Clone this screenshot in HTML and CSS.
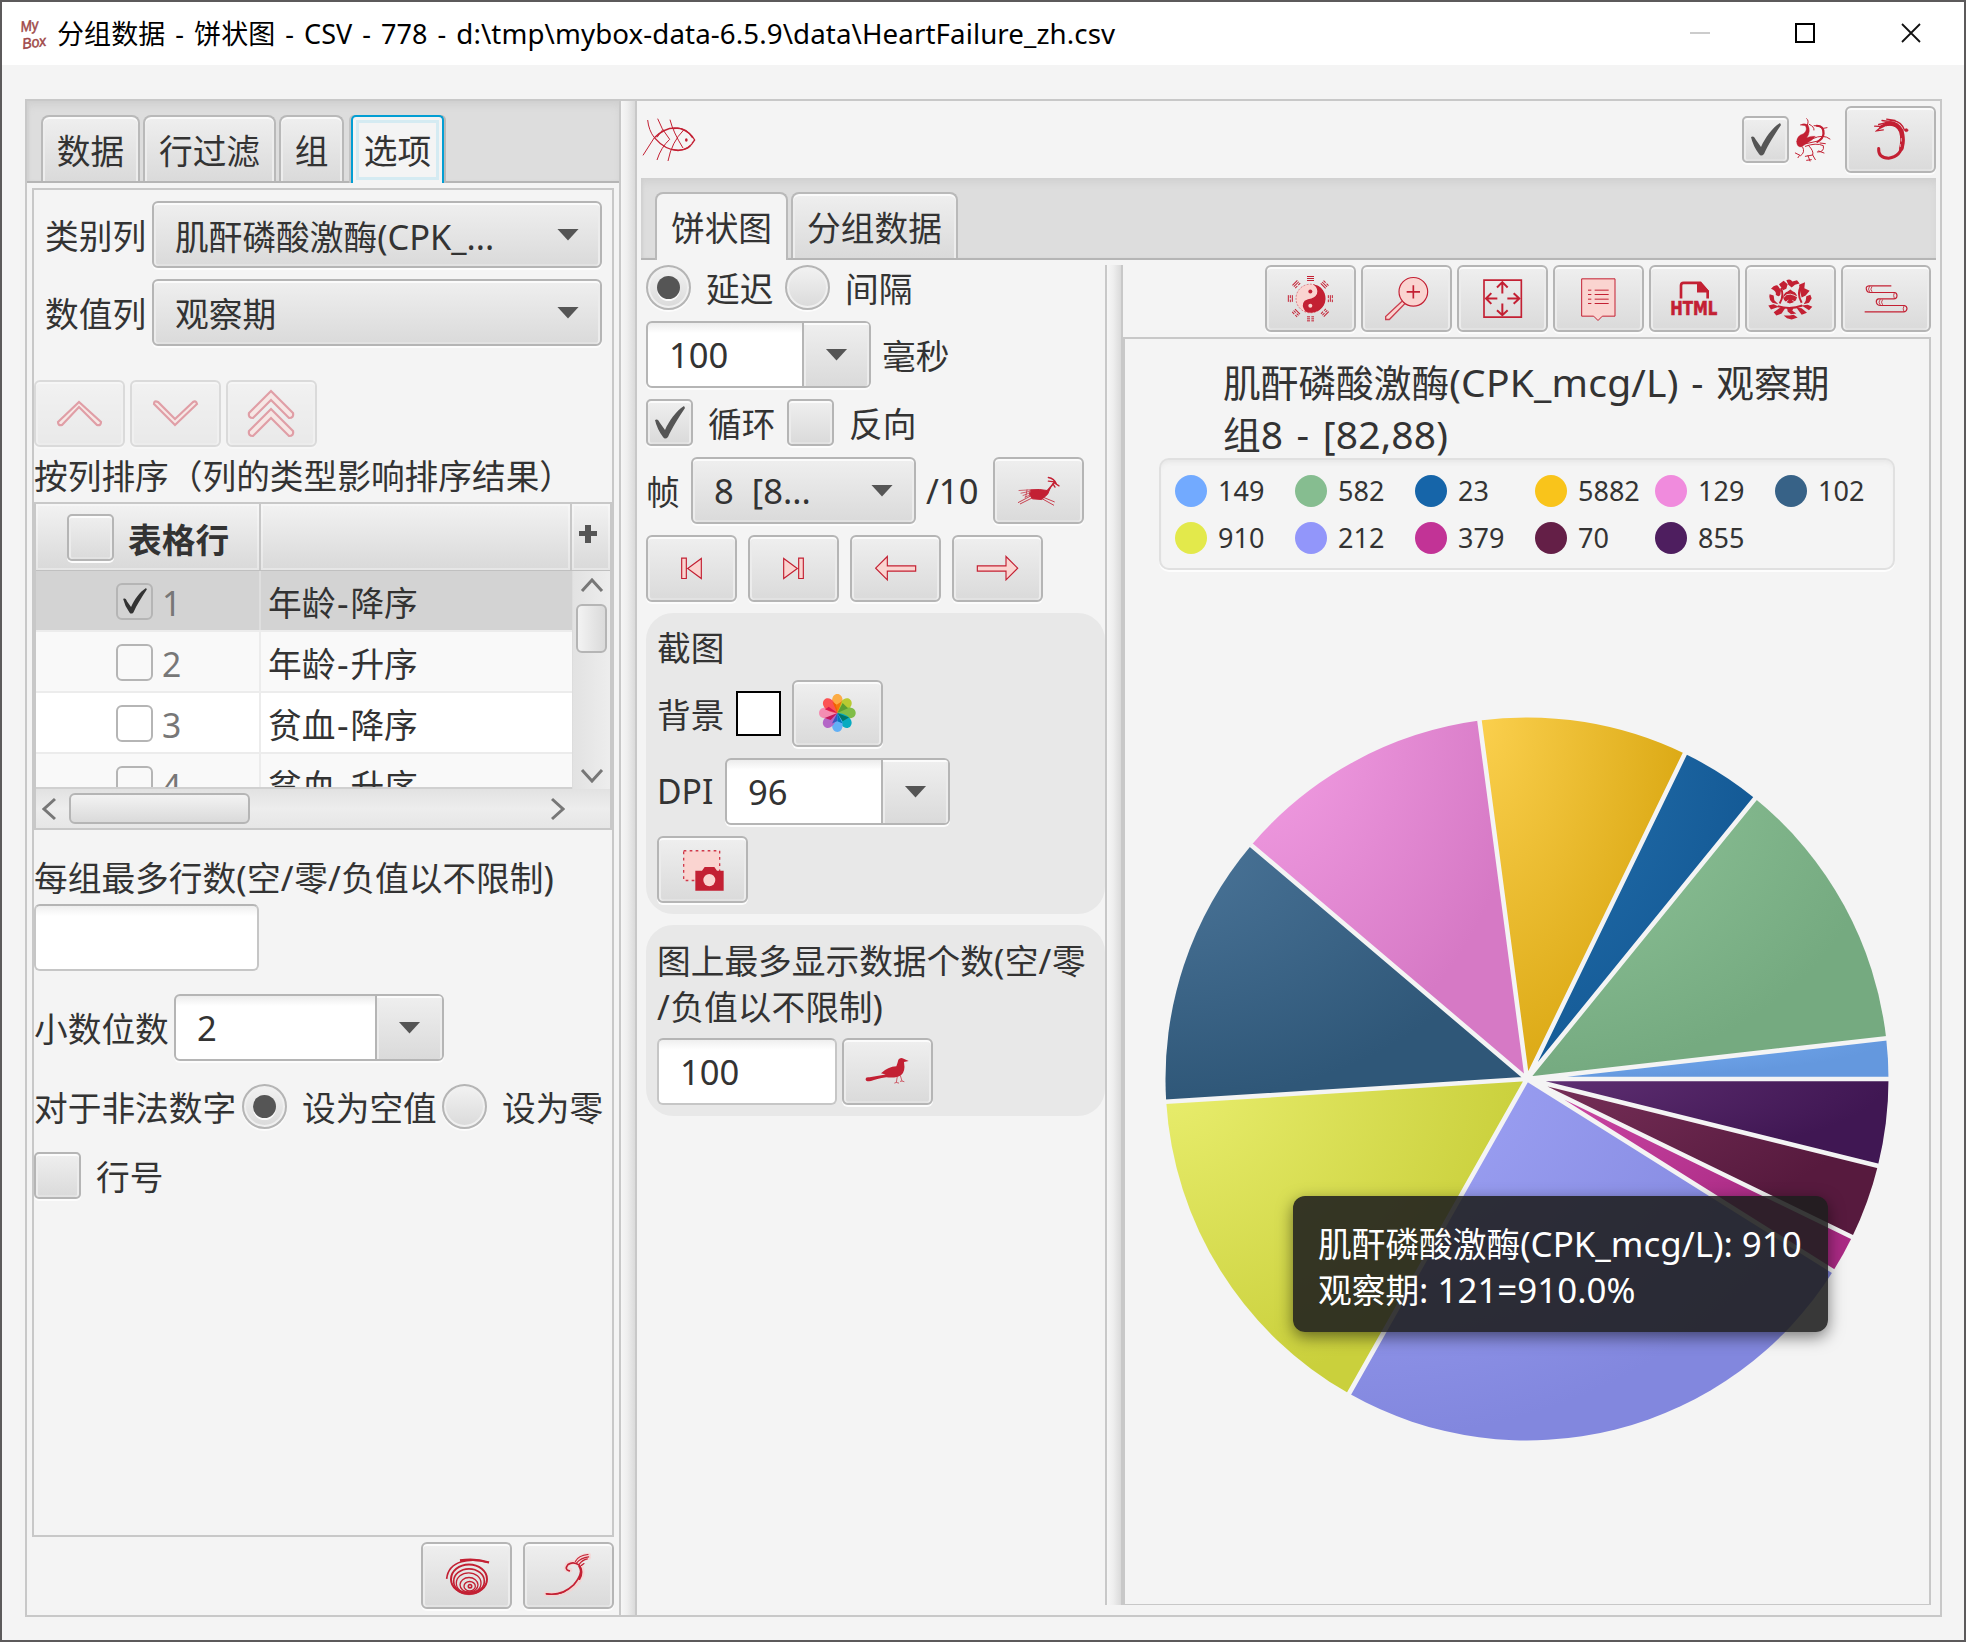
FILE: index.html
```html
<!DOCTYPE html>
<html lang="zh-CN">
<head>
<meta charset="utf-8">
<title>分组数据 - 饼状图</title>
<link rel="stylesheet" href="styles.css">
</head>
<body>
<svg class="defs" width="0" height="0" aria-hidden="true">
  <symbol id="tick" viewBox="0 0 30 33"><path d="M0 14C2 13 3 13 5 17L10 24C14 15 21 5 29 0L30 2C24 11 17 22 13 31Q10 34 8 31Q2 23 0 14Z" fill="currentColor"/></symbol>
</svg>
<div class="window">
  <header class="titlebar">
    <svg class="logo" width="32" height="38" viewBox="0 0 32 38"><g font-family="Liberation Sans" font-style="italic" font-size="15" fill="#a04848" stroke="#a04848" stroke-width=".5"><text transform="rotate(-8 1 16)" x="1" y="17" textLength="18" lengthAdjust="spacingAndGlyphs">My</text><text transform="rotate(-8 3 34)" x="3" y="34" textLength="24" lengthAdjust="spacingAndGlyphs">Box</text></g></svg>
    <span class="title">分组数据 - 饼状图 - CSV - 778 - <span class="path">d:\tmp\mybox-data-6.5.9\data\HeartFailure_zh.csv</span></span>
    <svg class="winctl" width="240" height="30" viewBox="0 0 240 30"><path d="M0 14H20" stroke="#ccc" stroke-width="2"/><path d="M106 5h18v18h-18z" fill="none" stroke="#000" stroke-width="2"/><path d="M212 5l18 18M230 5l-18 18" stroke="#111" stroke-width="1.8"/></svg>
  </header>
  <main class="main">
    <section class="left">
      <nav class="tabs tabs-left">
        <span class="tab tab-a">数据</span><span class="tab tab-b">行过滤</span><span class="tab tab-c">组</span><span class="tab tab-d active focused">选项</span>
      </nav>
      <div class="options">
        <div class="form">
          <span class="lbl">类别列</span>
          <div class="combo"><span class="lbl">肌酐磷酸激酶<span class="lat">(CPK_...</span></span><i class="arrow"></i></div>
          <span class="lbl">数值列</span>
          <div class="combo"><span class="lbl">观察期</span><i class="arrow"></i></div>
        </div>
        <div class="row moves">
          <button class="btn off"><svg viewBox="0 0 91 67"><path d="M24 42L45 22L67 42Q67 46 63 45L45 27L28 45Q24 46 24 42Z"/></svg></button>
          <button class="btn off"><svg viewBox="0 0 91 67"><path d="M24 24L45 45L67 24Q66 20 63 22L45 39L28 22Q24 20 24 24Z"/></svg></button>
          <button class="btn off"><svg viewBox="0 0 91 67"><path d="M23 33L45 11L67 33Q68 38 63 38L45 20L27 38Q22 38 23 33Z"/><path d="M23 51L45 29L67 51Q68 56 63 56L45 38L27 56Q22 56 23 51Z"/></svg></button>
        </div>
        <div class="lbl sortcap">按列排序（列的类型影响排序结果）</div>
        <div class="table">
          <div class="thead"><div class="th c1"><i class="box"></i><b>表格行</b></div><div class="th c2"></div><div class="th c3"><svg width="18" height="18" viewBox="0 0 18 18"><path d="M6 0h6v6h6v5h-6v7H6v-7H0V6h6z" fill="#555"/></svg></div></div>
          <div class="tbody">
            <div class="rows">
              <div class="tr sel"><div class="td c1"><i class="sbox"><svg width="24" height="26"><use href="#tick"/></svg></i><span>1</span></div><div class="td c2">年龄<span class="dash">-</span>降序</div></div>
              <div class="tr alt"><div class="td c1"><i class="sbox"></i><span>2</span></div><div class="td c2">年龄<span class="dash">-</span>升序</div></div>
              <div class="tr"><div class="td c1"><i class="sbox"></i><span>3</span></div><div class="td c2">贫血<span class="dash">-</span>降序</div></div>
              <div class="tr alt"><div class="td c1"><i class="sbox"></i><span>4</span></div><div class="td c2">贫血<span class="dash">-</span>升序</div></div>
            </div>
            <div class="vbar"><svg width="24" height="14" viewBox="0 0 24 14"><path d="M2 13L12 2L22 13"/></svg><i class="vthumb"></i><svg class="end" width="24" height="14" viewBox="0 0 24 14"><path d="M2 1L12 12L22 1"/></svg></div>
          </div>
          <div class="hbar"><svg width="14" height="24" viewBox="0 0 14 24"><path d="M13 2L2 12L13 22"/></svg><i class="hthumb"></i><svg class="end" width="14" height="24" viewBox="0 0 14 24"><path d="M1 2L12 12L1 22"/></svg></div>
        </div>
        <div class="lbl maxcap">每组最多行数<span class="sym">(</span>空<span class="sym">/</span>零<span class="sym">/</span>负值以不限制<span class="sym">)</span></div>
        <div class="input rowmax"></div>
        <div class="row gap23"><span class="lbl w140">小数位数</span><div class="edit dec"><span class="val">2</span><span class="drop"><i class="arrow"></i></span></div></div>
        <div class="row gap23"><span class="lbl w208">对于非法数字</span><i class="radio on"></i><span class="lbl rl w155">设为空值</span><i class="radio"></i><span class="lbl rl">设为零</span></div>
        <div class="row gap23"><i class="box"></i><span class="lbl rl">行号</span></div>
      </div>
      <div class="foot">
        <button class="btn"><svg viewBox="123 126 273 200" fill="none" stroke="#c32033"><path d="M200 236C206 180 270 172 327 187" stroke-width="5"/><path d="M240 181Q285 174 327 187" stroke-width="7"/><ellipse cx="267" cy="237" rx="54" ry="44" stroke-width="6"/><ellipse cx="267" cy="243" rx="46" ry="37" stroke-width="5"/><ellipse cx="266" cy="249" rx="37" ry="31" stroke-width="4"/><ellipse cx="267" cy="254" rx="27" ry="22" stroke-width="4"/><ellipse cx="269" cy="258" rx="17" ry="14" stroke-width="4"/><circle cx="270" cy="258" r="5" stroke-width="5"/><path d="M216 252Q232 284 267 284T318 252Q308 272 268 274T216 252Z" fill="#c32033"/></svg></button>
        <button class="btn"><svg viewBox="429 126 273 200" fill="none" stroke-linecap="round"><path d="M498 281Q550 290 585 255Q620 218 598 193Q580 180 562 193Q552 212 570 210M588 186Q600 167 626 165M594 190Q604 174 626 172" stroke="#f9cfcd" stroke-width="14" opacity=".7"/><path d="M500 281Q545 288 581 254Q612 218 598 195Q580 182 564 193Q552 208 568 212" stroke="#c32033" stroke-width="5"/><path d="M586 184Q596 165 624 163M590 188Q602 173 626 170M598 192Q606 180 622 176M604 196L612 190" stroke="#c32033" stroke-width="3.5"/><path d="M498 281Q530 287 556 274" stroke="#c32033" stroke-width="3"/><path d="M598 198Q610 216 598 236" stroke="#c32033" stroke-width="7"/></svg></button>
      </div>
    </section>
    <div class="divider"></div>
    <section class="right">
      <div class="topbar">
        <svg class="fish" width="54" height="44" viewBox="35 88 162 132" fill="none" stroke="#c32033" stroke-width="4"><path d="M72 147Q110 110 150 120Q180 130 193 154Q178 182 143 186Q104 184 72 147M193 154l-8 10"/><path d="M52 94Q55 125 72 147L38 200M82 90Q92 120 118 152Q92 176 80 214M119 93Q128 130 158 178M160 124Q124 160 113 217M98 122L80 146" stroke-width="3"/><path d="M130 120Q165 112 187 148M125 182Q160 190 180 172" stroke-width="4"/><ellipse cx="168" cy="154" rx="4" ry="5" fill="#c32033" stroke="none"/></svg>
        <i class="box push"><svg width="30" height="33"><use href="#tick"/></svg></i>
        <svg class="phoenix" width="38" height="46" viewBox="284 350 114 138" fill="none" stroke="#c32033" stroke-linecap="round"><path d="M292 424Q292 406 312 400Q326 390 318 376L302 374Q314 366 326 374Q336 394 322 412Q335 406 348 408Q340 420 324 428L306 440Q292 440 292 424Z" fill="#c32033" stroke-width="1"/><path d="M324 374Q330 360 322 355M330 372Q346 380 344 389M344 376Q366 374 371 392Q374 412 356 422L320 430M372 384L383 382M340 415Q372 400 392 416M318 438Q350 426 372 436Q376 456 354 455M362 428L378 430M358 452L374 458" stroke-width="3"/><path d="M352 376Q374 376 373 400Q372 414 354 425" stroke-width="6"/><path d="M310 440Q318 456 304 466L288 458M300 466L296 472M328 436Q344 452 340 464L318 468M340 464L348 478M326 466L332 482M322 480L336 478" stroke-width="3"/></svg>
        <button class="btn dragon"><svg viewBox="435 319 273 200" fill="none" stroke="#c32033" stroke-linecap="round"><path d="M536 446Q534 474 566 475Q604 470 608 430Q612 390 584 374Q560 368 542 382" stroke-width="9"/><path d="M560 372Q590 366 604 394Q611 420 604 446" stroke-width="14"/><path d="M524 379L545 380L530 393L550 390M536 374L556 369M546 362Q566 366 580 362Q604 366 613 390M560 358L585 362" stroke-width="4"/><circle cx="619" cy="391" r="5" fill="#c32033"/><path d="M604 416v8M601 434v6" stroke="#eee" stroke-width="2"/></svg></button>
      </div>
      <nav class="tabs tabs-right"><span class="tab tab-e active">饼状图</span><span class="tab tab-f">分组数据</span></nav>
      <div class="body">
        <div class="mid">
          <div class="row"><i class="radio on"></i><span class="lbl rl w94">延迟</span><i class="radio"></i><span class="lbl rl">间隔</span></div>
          <div class="row"><div class="edit e225"><span class="val">100</span><span class="drop"><i class="arrow"></i></span></div><span class="lbl ml11">毫秒</span></div>
          <div class="row"><i class="box"><svg width="30" height="33"><use href="#tick"/></svg></i><span class="lbl rl w94">循环</span><i class="box"></i><span class="lbl rl">反向</span></div>
          <div class="row"><span class="lbl w45">帧</span><div class="combo e225"><span class="val0">8&nbsp; [8...</span><i class="arrow"></i></div><span class="ten">/10</span>
            <button class="btn"><svg viewBox="1090 1102 273 200" stroke="#c32033" fill="none" stroke-linecap="round"><path d="M1203 1200L1230 1199L1252 1202L1262 1194L1254 1213L1236 1229L1208 1227L1200 1215Z" fill="#c32033" stroke-width="3"/><path d="M1256 1200L1272 1180" stroke-width="5"/><path d="M1272 1178L1288 1188M1270 1182L1276 1192M1274 1176L1256 1174M1280 1182Q1274 1166 1256 1163" stroke-width="4"/><path d="M1238 1227L1272 1246M1240 1222L1274 1236M1206 1225L1172 1242M1200 1220L1166 1238" stroke-width="2.5"/><path d="M1200 1200L1168 1202M1198 1205L1174 1210M1198 1210L1180 1217M1200 1216L1186 1222M1192 1200L1188 1222" stroke-width="2"/></svg></button></div>
          <div class="row g11 pink">
            <button class="btn"><svg viewBox="48 1336 273 200"><path d="M155 1405h14v61h-14zM214 1406v60L173 1436Z"/></svg></button>
            <button class="btn"><svg viewBox="354 1336 273 200"><path d="M506 1405h14v61h-14zM461 1406v60L502 1436Z"/></svg></button>
            <button class="btn"><svg viewBox="660 1336 273 200"><path d="M737 1435L772 1400V1428H857V1444H772V1470Z"/></svg></button>
            <button class="btn"><svg viewBox="966 1336 273 200"><path d="M1163 1435L1128 1400V1428H1042V1444H1128V1470Z"/></svg></button>
          </div>
          <div class="panel">
            <div class="lbl">截图</div>
            <div class="row"><span class="lbl w79">背景</span><i class="swatch"></i>
              <button class="btn"><svg viewBox="487 233 273 194.5" preserveAspectRatio="none"><g transform="translate(623 329)"><path d="M0 0C-24-26-18-55 0-55S24-26 0 0Z" fill="#fcac45"/><path d="M0 0C-24-26-18-55 0-55S24-26 0 0Z" fill="#b9cb32" transform="rotate(45)"/><path d="M0 0C-24-26-18-55 0-55S24-26 0 0Z" fill="#80bd48" transform="rotate(90)"/><path d="M0 0C-24-26-18-55 0-55S24-26 0 0Z" fill="#08abc0" transform="rotate(135)"/><path d="M0 0C-24-26-18-55 0-55S24-26 0 0Z" fill="#62b0f5" transform="rotate(180)"/><path d="M0 0C-24-26-18-55 0-55S24-26 0 0Z" fill="#b467c7" transform="rotate(225)"/><path d="M0 0C-24-26-18-55 0-55S24-26 0 0Z" fill="#f48db2" transform="rotate(270)"/><path d="M0 0C-24-26-18-55 0-55S24-26 0 0Z" fill="#fb5253" transform="rotate(315)"/><path d="M0 0L-15-33L-2-24Z" fill="#f26100"/><path d="M0 0L-2-24L14-34Z" fill="#f4740c"/><path d="M0 0L16-29L32-14Z" fill="#5b9f31"/><path d="M0 0L35 13L16 24Z" fill="#00776b"/><path d="M0 0L16 30L0 24Z" fill="#0277bd"/><path d="M0 0L-1 24L-16 30Z" fill="#3858bd"/><path d="M0 0L-20 20L-38 14Z" fill="#c2185b"/><path d="M0 0L-37-10L-26-18Z" fill="#d8164e"/></g></svg></button></div>
            <div class="row"><span class="dpi">DPI</span><div class="edit e225"><span class="val">96</span><span class="drop"><i class="arrow"></i></span></div></div>
            <div class="row"><button class="btn"><svg viewBox="82 686 273 194.5" preserveAspectRatio="none"><path d="M162 729h108v86h-108z" fill="#fad4d0" stroke="#d0394a" stroke-width="4" stroke-dasharray="8 10"/><path d="M197 787h20l8-11h29l8 11h20v58h-85z" fill="#c32033"/><circle cx="239" cy="814" r="18" fill="#fad4d0"/></svg></button></div>
          </div>
          <div class="panel">
            <div class="lbl cap2">图上最多显示数据个数<span class="sym">(</span>空<span class="sym">/</span>零<br><span class="sym">/</span>负值以不限制<span class="sym">)</span></div>
            <div class="row"><div class="input num">100</div>
              <button class="btn"><svg viewBox="637 1273 273 194.5" preserveAspectRatio="none"><path d="M708 1391Q709 1386 720 1387L768 1379L754 1375Q775 1356 800 1355Q804 1345 806 1336Q812 1328 822 1333L837 1340L823 1343Q828 1372 814 1381Q800 1390 770 1387Q740 1391 724 1398Q706 1400 708 1391Z" fill="#c32033"/><path d="M803 1384L800 1402L794 1404M800 1402L808 1404M812 1382L817 1398L811 1399M817 1398L824 1400" stroke="#c32033" stroke-width="2" fill="none"/></svg></button></div>
          </div>
        </div>
        <div class="divider"></div>
        <div class="view">
          <div class="toolbar">
            <button class="btn"><svg viewBox="435 45 273 200"><circle cx="571" cy="145" r="43" fill="#fad4d0" stroke="#c32033" stroke-width="1.5" stroke-dasharray="6 4"/><path d="M578 102A43 43 0 1 1 556 184Q542 165 554 152Q564 146 574 145Q592 138 592 123Q591 108 578 102Z" fill="#c32033"/><circle cx="571" cy="124" r="6" fill="#c32033"/><circle cx="571" cy="167" r="6" fill="#fad4d0"/><g stroke="#c32033" stroke-width="3" fill="none"><path d="M561 79h21M561 85h21M561 91h21M561 200h9m4 0h8M561 206h9m4 0h8M561 212h9m4 0h8M505 135v20M511 135v9m0 4v8M517 135v20M625 135v9m0 4v8M631 135v20M637 135v9m0 4v8"/><path transform="rotate(45 571 145)" d="M561 79h9m4 0h8M561 85h21M561 91h21M561 200h21M561 206h9m4 0h8M561 212h9m4 0h8"/><path transform="rotate(-45 571 145)" d="M561 79h21M561 85h21M561 91h9m4 0h8M561 200h9m4 0h8M561 206h9m4 0h8M561 212h21"/></g></svg></button>
            <button class="btn"><svg viewBox="723 45 273 200" stroke="#c32033"><path d="M846 153L797 199V208H808L855 160" fill="#fad4d0" stroke="#ca4050" stroke-width="4"/><circle cx="880" cy="125" r="43" fill="#fad4d0" stroke-width="3.5"/><path d="M860 125h40M880 105v40" stroke-width="5"/></svg></button>
            <button class="btn"><svg viewBox="1011 45 273 200" fill="none" stroke="#c32033" stroke-width="5"><path d="M1092 90h112v111h-112z"/><path stroke-width="6" d="M1147 130V96M1131 112L1147 96L1163 112M1147 160v35M1131 180L1147 195L1163 180M1132 145h-35M1114 129L1098 145L1114 161M1162 145h36M1181 129L1198 145L1181 161"/></svg></button>
            <button class="btn"><svg viewBox="160 45 273 200" stroke="#c32033"><path d="M246 86h100v112h-38l-13 13l-13-13h-36z" fill="#fad4d0" stroke-width="3"/><path d="M265 120h10M285 120h42M265 133h10M285 133h42M265 147h10M285 147h42M265 160h10M285 160h42" stroke-width="3"/></svg></button>
            <button class="btn"><svg viewBox="448 45 273 200"><path d="M544 145V106Q544 98 552 98H602L624 124V145" fill="none" stroke="#c32033" stroke-width="8"/><path d="M592 98V127H627V121L604 96Z" fill="#c32033"/><text x="512" y="195" textLength="141" lengthAdjust="spacingAndGlyphs" font-family="DejaVu Sans" font-weight="bold" font-size="58" fill="#c32033" stroke="#c32033" stroke-width="2">HTML</text></svg></button>
            <button class="btn"><svg viewBox="736 45 273 200" fill="#c32033"><g transform="translate(872 148)"><path d="M-22-6Q-20-20-8-24L0-30L8-24Q20-20 20-6Q16 10-2 12Q-18 8-22-6Z"/><path d="M-58-32Q-48-46-38-42L-28-28L-30-14Q-34-6-44-14Q-40-24-58-32ZM-34-46L-20-56L-8-46L-12-32L-22-28ZM-12-58Q0-64 6-54L20-58L28-48L14-44L4-36L-6-44ZM26-44L44-52L42-34L58-26L46-12L34-6L30-20ZM-62-16L-50-12L-48 2L-36 14L-54 10Q-66 0-62-16ZM48-10L60-14L64-4L56 10L40 14L46 4ZM-66 18L-50 14L-34 22L-58 30ZM34 18L52 16L66 22L56 32ZM-50 38L-30 24L-14 24L-26 42L-42 48ZM-10 24L10 24L6 34L18 42L2 44L-8 36ZM18 24L34 26L50 40L34 46ZM-20 48L-2 48L10 46L22 54L4 60L-10 56Z"/><path d="M-28-34Q-18-10-32 12M30-36Q20-16 34 10M-38 20Q0 32 36 18" fill="none" stroke="#c32033" stroke-width="6"/><path d="M-20-6Q-12-18 0-16T20-8M-14 8L-6 2M16 8L6 3" fill="none" stroke="#e8e8e8" stroke-width="2.5"/></g></svg></button>
            <button class="btn last"><svg viewBox="1024 45 273 200" fill="none" stroke="#c32033" stroke-width="3.5"><path d="M1175 107H1108Q1098 108 1100 117Q1102 128 1114 127H1184Q1192 128 1192 136Q1192 146 1182 146H1136Q1129 148 1130 156Q1132 166 1142 166H1214Q1222 168 1222 176Q1220 185 1212 185H1095"/><path d="M1110 108Q1103 117 1110 125M1117 109Q1110 117 1117 125M1184 127Q1180 136 1184 145M1142 147Q1134 156 1142 165M1149 148Q1142 156 1149 164M1213 167Q1208 176 1213 185" stroke-width="2.5"/></svg></button>
          </div>
          <div class="chart">
            <h1>肌酐磷酸激酶<span class="clat">(CPK_mcg/L)</span> - 观察期<br>组<span class="clat">8 - [82,88)</span></h1>
            <ul class="legend">
              <li><i style="background:#72aaff"></i>149</li><li><i style="background:#86bd90"></i>582</li><li><i style="background:#1665a9"></i>23</li><li><i style="background:#f9c41b"></i>5882</li><li><i style="background:#f08bdd"></i>129</li><li><i style="background:#376287"></i>102</li>
              <li><i style="background:#e3e94b"></i>910</li><li><i style="background:#9296fa"></i>212</li><li><i style="background:#c23396"></i>379</li><li><i style="background:#641f47"></i>70</li><li><i style="background:#4e1e5f"></i>855</li>
            </ul>
            <div class="pie">
              <svg width="724" height="724" viewBox="-362 -362 724 724">
                <defs>
                  <radialGradient id="g1" cx="0" cy="0" r="1"><stop stop-color="#7ab2f8"/><stop offset="1" stop-color="#6498de"/></radialGradient>
                  <radialGradient id="g2" cx="0" cy="0" r="1"><stop stop-color="#92c79c"/><stop offset="1" stop-color="#75aa80"/></radialGradient>
                  <radialGradient id="g3" cx="0" cy="0" r="1"><stop stop-color="#2570ad"/><stop offset="1" stop-color="#145a96"/></radialGradient>
                  <radialGradient id="g4" cx="0" cy="0" r="1"><stop stop-color="#fbd04e"/><stop offset="1" stop-color="#dcaa16"/></radialGradient>
                  <radialGradient id="g5" cx="0" cy="0" r="1"><stop stop-color="#f4a0e5"/><stop offset="1" stop-color="#d679c5"/></radialGradient>
                  <radialGradient id="g6" cx="0" cy="0" r="1"><stop stop-color="#4b7599"/><stop offset="1" stop-color="#2f5778"/></radialGradient>
                  <radialGradient id="g7" cx="0" cy="0" r="1"><stop stop-color="#e9ee6e"/><stop offset="1" stop-color="#cad03c"/></radialGradient>
                  <radialGradient id="g8" cx="0" cy="0" r="1"><stop stop-color="#a2a6f8"/><stop offset="1" stop-color="#8287de"/></radialGradient>
                  <radialGradient id="g9" cx="0" cy="0" r="1"><stop stop-color="#cf4aa8"/><stop offset="1" stop-color="#aa2a84"/></radialGradient>
                  <radialGradient id="g10" cx="0" cy="0" r="1"><stop stop-color="#783059"/><stop offset="1" stop-color="#571a3e"/></radialGradient>
                  <radialGradient id="g11" cx="0" cy="0" r="1"><stop stop-color="#603074"/><stop offset="1" stop-color="#401753"/></radialGradient>
                </defs>
                <path fill="url(#g1)" d="M0 0L361.5 0A361.5 361.5 0 0 0 359.2-40.6Z"/>
                <path fill="url(#g2)" d="M0 0L359.2-40.6A361.5 361.5 0 0 0 228-280.5Z"/>
                <path fill="url(#g3)" d="M0 0L228-280.5A361.5 361.5 0 0 0 157.9-325.2Z"/>
                <path fill="url(#g4)" d="M0 0L157.9-325.2A361.5 361.5 0 0 0-47.5-358.4Z"/>
                <path fill="url(#g5)" d="M0 0L-47.5-358.4A361.5 361.5 0 0 0-275.7-233.8Z"/>
                <path fill="url(#g6)" d="M0 0L-275.7-233.8A361.5 361.5 0 0 0-360.8 22.7Z"/>
                <path fill="url(#g7)" d="M0 0L-360.8 22.7A361.5 361.5 0 0 0-178 314.6Z"/>
                <path fill="url(#g8)" d="M0 0L-178 314.6A361.5 361.5 0 0 0 306.2 192.1Z"/>
                <path fill="url(#g9)" d="M0 0L306.2 192.1A361.5 361.5 0 0 0 325.1 158.1Z"/>
                <path fill="url(#g10)" d="M0 0L325.1 158.1A361.5 361.5 0 0 0 350.9 86.8Z"/>
                <path fill="url(#g11)" d="M0 0L350.9 86.8A361.5 361.5 0 0 0 361.5 0Z"/>
                <path stroke="#f4f4f4" stroke-width="4.6" d="M0 0L362 0M0 0L360-40.7M0 0L228.5-281M0 0L158.2-326M0 0L-47.6-359M0 0L-276-234M0 0L-361.5 22.8M0 0L-178.5 315.5M0 0L307 192.6M0 0L326 158.5M0 0L351.5 87"/>
              </svg>
              <div class="tooltip">肌酐磷酸激酶<span class="tlat">(CPK_mcg/L): 910</span><br>观察期<span class="tlat">: 121=910.0%</span></div>
            </div>
          </div>
        </div>
      </div>
    </section>
  </main>
</div>
</body>
</html>
```
FILE: styles.css
```css
* { box-sizing: border-box; }
body { margin: 0; background: #f4f4f4; color: #333; font: 33.7px/45px "Noto Sans", "Noto Sans CJK SC", sans-serif; }
i { font-style: normal; display: block; flex: none; }
svg { display: block; flex: none; }
.defs { position: absolute; }
.window { width: 1966px; height: 1642px; border: 2px solid #5c5a5b; background: #f4f4f4; display: flex; flex-direction: column; overflow: hidden; }
.titlebar { height: 63px; background: #fff; display: flex; align-items: center; padding-left: 18px; color: #000; font-size: 27px; white-space: nowrap; flex: none; }
.logo { margin-right: 5px; }
.title { word-spacing: 2.8px; letter-spacing: .1px; }
.path { font-size: 27.7px; }
.winctl { margin-left: auto; margin-right: 34px; }
.main { margin: 34px 22px 23px 23px; height: 1518px; border: 2px solid #c8c8c8; display: flex; }
.left { width: 592px; display: flex; flex-direction: column; flex: none; }
.divider { width: 18px; flex: none; border-left: 2px solid #c8c8c8; border-right: 2px solid #c8c8c8; background: linear-gradient(90deg, #f6f6f6, #eee 45%, #dadada); }
.right { flex: 1; display: flex; flex-direction: column; padding-left: 4px; min-width: 0; }

.tabs { height: 82px; flex: none; background: #ddd; border-bottom: 2px solid #b5b5b5; box-shadow: inset 0 6px 8px -2px #cfcfcf, inset 2px 0 2px #d2d2d2; display: flex; align-items: flex-end; padding-left: 14px; gap: 3px; }
.tab { height: 66px; border: 2px solid #b9b9b9; border-bottom: 0; border-radius: 8px 8px 0 0; background: linear-gradient(#efefef, #dadada); box-shadow: inset 0 2px #fafafa, inset 2px 0 #ededed, inset -2px 0 #ededed; text-align: center; padding-top: 12px; white-space: nowrap; }
.tab.active { background: #f4f4f4; height: 68px; margin-bottom: -2px; box-shadow: none; }
.tab.focused { border: 2px solid #039ed3; border-bottom: 0; border-radius: 5px 5px 0 0; box-shadow: inset 0 0 0 3px #f4f4f4, inset 0 0 0 6px #d5ebf2, 2px 0 #b9b9b9, -2px 0 #c4c4c4; }
.tab-a { width: 99px; } .tab-b { width: 133px; } .tab-c { width: 65px; } .tab-d { width: 93px; margin-left: 4px; }
.tab-e { width: 133px; } .tab-f { width: 167px; }
.tabs-right { margin-right: 4px; }

.options { margin: 5px 5px 0; height: 1349px; border: 2px solid #c8c8c8; flex: none; }
.lbl { padding-top: 4px; line-height: 41px; white-space: nowrap; }
.lat { font-size: 34.4px; }
.sym { font-size: 34.4px; letter-spacing: .6px; }
.form { display: grid; grid-template-columns: 107px 450px; row-gap: 11px; padding: 11px 0 0 11px; align-items: center; }
.row { display: flex; align-items: center; }
.btn, .combo, .edit, .box { border: 2px solid #b5b5b5; border-radius: 6px; background: linear-gradient(#efefef, #dadada); box-shadow: inset 0 2px #fbfbfb, inset 2px 0 #ececec, inset -2px 0 #ececec, inset 0 -2px #e2e2e2, 0 2px #fcfcfc; }
.btn { width: 91px; height: 67px; padding: 0; display: grid; place-items: center; overflow: hidden; flex: none; }
.btn svg { width: 91px; height: 67px; margin: -2px; }
.btn.off { opacity: .4; }
.off path, .pink path { fill: #fad4d0; stroke: #c32033; stroke-width: 2.2; }
.pink path { stroke-width: 3.5; }
.combo { width: 450px; height: 67px; display: flex; align-items: center; justify-content: space-between; padding: 0 21px; }
.arrow { width: 22px; height: 12px; background: #555; clip-path: polygon(0 0, 100% 0, 50% 100%); }
.moves { margin-top: 34px; gap: 5px; }
.sortcap { height: 55px; padding-top: 9px; }

.table { height: 328px; border: 2px solid #c8c8c8; }
.thead { display: flex; height: 67px; border-bottom: 1px solid #c0c0c0; }
.th { background: linear-gradient(#f2f2f2, #d9d9d9); border-right: 2px solid #c8c8c8; box-shadow: inset 0 0 0 2px rgba(255,255,255,.35); display: flex; align-items: center; }
.th.c1 { padding-left: 31px; width: 225px; }
.th b { margin-left: 14px; padding-top: 6px; }
.th.c2 { width: 311px; }
.th.c3 { flex: 1; border-right: 0; padding: 0 0 6px 7px; }
.tbody { height: 218px; display: flex; overflow: hidden; }
.rows { width: 536px; border-bottom: 2px solid #d0d0d0; overflow: hidden; background: #fff; }
.tr { height: 61px; display: flex; border-bottom: 2px solid #ececec; }
.tr.alt { background: #f9f9f9; } .tr.sel { background: #d3d3d3; }
.td { display: flex; align-items: center; padding-top: 6px; }
.td.c1 { width: 225px; border-right: 2px solid #ececec; padding-left: 80px; color: #777; }
.tr.sel .td.c1 { border-color: #dedede; }
.td.c1 span { margin-left: 9px; }
.td.c2 { padding-left: 7px; }
.dash { width: 15px; text-align: center; margin-top: -2px; font-size: 36px; }
.sbox { width: 37px; height: 37px; border: 2px solid #b5b5b5; border-radius: 6px; margin-top: -5px; display: grid; place-items: center; color: #333; }
.vbar { flex: 1; background: linear-gradient(90deg, #e2e2e2, #ededed); display: flex; flex-direction: column; align-items: center; padding: 7px 0 6px; border-left: 1px solid #ddd; }
.vbar path, .hbar path { fill: none; stroke: #777; stroke-width: 3; }
.vthumb { width: 31px; height: 49px; border: 2px solid #b5b5b5; border-radius: 6px; background: linear-gradient(90deg, #f3f3f3, #dadada); margin-top: 12px; }
.vbar .end { margin-top: auto; }
.hbar { height: 39px; display: flex; align-items: center; background: linear-gradient(#e2e2e2, #ededed, #e6e6e6); padding: 0 45px 0 6px; }
.hthumb { width: 181px; height: 31px; border: 2px solid #b5b5b5; border-radius: 6px; background: linear-gradient(#f3f3f3, #dadada); margin-left: 13px; }
.hbar .end { margin-left: auto; }

.maxcap { margin-top: 23px; height: 51px; padding-top: 4px; }
.input { border: 2px solid #c6c6c6; border-top-color: #b5b5b5; border-radius: 6px; background: linear-gradient(#efefef, #fff 10px); height: 67px; }
.rowmax { width: 225px; }
.gap23 { margin-top: 23px; }
.w140 { width: 140px; } .w155 { width: 155px; } .w208 { width: 208px; } .w45 { width: 45px; }
.rl { padding-left: 15px; } .w94 { width: 94px; } .w79 { width: 79px; }
.ml11 { margin-left: 11px; }
.edit { height: 67px; display: flex; background: linear-gradient(#ececec, #fff 10px); box-shadow: 0 2px #fcfcfc; overflow: hidden; }
.dec { width: 270px; } .e225 { width: 225px; }
.val { flex: 1; padding: 9px 0 0 21px; font-size: 34.6px; }
.val0 { font-size: 34.6px; }
.drop { width: 67px; border-left: 2px solid #b5b5b5; background: linear-gradient(#efefef, #dadada); box-shadow: inset 0 2px #fbfbfb, inset 2px 0 #ececec, inset -2px 0 #ececec; display: grid; place-items: center; }
.radio { width: 45px; height: 45px; border-radius: 50%; border: 2px solid #b5b5b5; background: linear-gradient(#f2f2f2, #dadada); box-shadow: inset 0 0 0 2px #f0f0f0, 0 2px #fcfcfc; display: grid; place-items: center; }
.radio.on::after { content: ""; width: 23px; height: 23px; border-radius: 50%; background: #555; box-shadow: 0 2px #fafafa; }
.box { width: 47px; height: 47px; border-radius: 5px; display: grid; place-items: center; color: #555; }
.foot { margin: 5px 5px 0; display: flex; justify-content: flex-end; gap: 11px; }

.topbar { height: 77px; flex: none; display: flex; align-items: center; padding: 0 4px 0 1px; }
.push { margin-left: auto; }
.phoenix { margin-left: 5px; }
.dragon { margin-left: 13px; }
.body { display: flex; padding-top: 5px; height: 1345px; flex: none; margin-right: 9px; }
.mid { width: 464px; padding-left: 5px; display: flex; flex-direction: column; gap: 11px; flex: none; }
.g11 { gap: 11px; }
.ten { font-size: 34.6px; width: 77px; padding-left: 10px; flex: none; }
.panel { background: #e8e8e8; border-radius: 27px; padding: 11px; display: flex; flex-direction: column; gap: 11px; }
.swatch { width: 45px; height: 45px; border: 2px solid #000; background: #fff; margin-right: 11px; }
.dpi { width: 68px; }
.cap2 { height: 91px; padding-top: 2px; line-height: 45px; flex: none; }
.num { width: 180px; margin-right: 5px; padding: 9px 0 0 21px; font-size: 34.6px; }

.view { flex: 1; min-width: 0; display: flex; flex-direction: column; }
.toolbar { height: 72px; display: flex; gap: 5px; padding-left: 142px; overflow: hidden; flex: none; }
.toolbar .last { width: 90px; }
.chart { flex: 1; border: 2px solid #c8c8c8; border-bottom-width: 1px; display: flex; flex-direction: column; }
h1 { margin: 17px 0 0 98px; font-weight: normal; font-size: 37.7px; line-height: 51px; white-space: nowrap; height: 102px; word-spacing: 3px; }
.clat { font-size: 39px; letter-spacing: .2px; }
.tlat { font-size: 34.9px; }
.legend { list-style: none; margin: 0 0 0 34px; width: 736px; height: 112px; border: 2px solid #e0e0e0; border-radius: 10px; box-shadow: inset 0 5px 5px -3px #e6e6e6, 0 2px #fdfdfd; padding: 7px 0 0 14px; display: grid; grid-template-columns: repeat(6, 120px); grid-auto-rows: 47px; flex: none; }
.legend li { display: flex; align-items: center; font-size: 27px; }
.legend i { width: 32px; height: 32px; border-radius: 50%; margin-right: 11px; }
.pie { position: relative; width: 724px; margin: 147px 0 0 40px; }
.tooltip { position: absolute; left: 128px; top: 479px; width: 535px; height: 136px; border-radius: 12px; background: rgba(30,30,30,.88); box-shadow: 0 5px 16px rgba(0,0,0,.5); color: #fff; padding: 25px; white-space: nowrap; }
```
